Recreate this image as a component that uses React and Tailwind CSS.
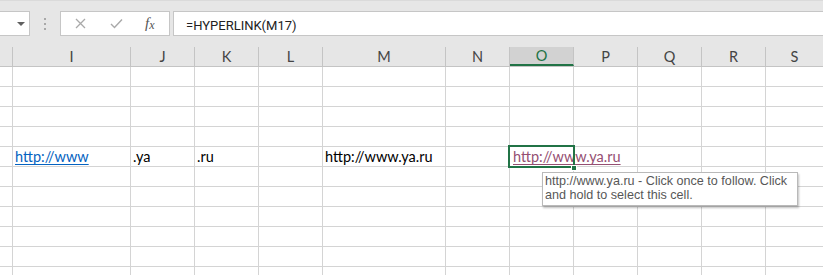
import React from "react";

const cols = [
  { key: "H", w: "w-[13px]", label: "" },
  { key: "I", w: "w-[118px]", label: "I" },
  { key: "J", w: "w-[64px]", label: "J" },
  { key: "K", w: "w-[64px]", label: "K" },
  { key: "L", w: "w-[64px]", label: "L" },
  { key: "M", w: "w-[123px]", label: "M" },
  { key: "N", w: "w-[64px]", label: "N" },
  { key: "O", w: "w-[64px]", label: "O" },
  { key: "P", w: "w-[64px]", label: "P" },
  { key: "Q", w: "w-[64px]", label: "Q" },
  { key: "R", w: "w-[64px]", label: "R" },
  { key: "S", w: "flex-1", label: "S" },
];

const rowCount = 11;
const dataRow = 4;

function CellContent({ col, row }) {
  if (row !== dataRow) return null;
  if (col === "I")
    return (
      <span className="text-[#0563c1] underline underline-offset-[2px] decoration-[1px]">
        http://www
      </span>
    );
  if (col === "J") return <span className="text-black">.ya</span>;
  if (col === "K") return <span className="text-black">.ru</span>;
  if (col === "M") return <span className="text-black">http://www.ya.ru</span>;
  if (col === "O")
    return (
      <>
        <span className="text-[#954f72] underline underline-offset-[2px] decoration-[1px] pl-[1px]">
          http://www.ya.ru
        </span>
        <div className="absolute left-[-2px] top-[-2px] w-[67px] h-[23px] border-2 border-[#217346] z-10" />
        <div className="absolute left-[61px] top-[18px] w-[6px] h-[6px] bg-[#217346] border border-white z-20" />
      </>
    );
  return null;
}

export default function App() {
  return (
    <div className="relative w-[823px] h-[275px] overflow-hidden bg-white font-['Lato',sans-serif]">
      {/* Top formula bar area */}
      <div className="h-[47px] bg-[#e6e6e6] border-t border-[#dadada] flex flex-col">
        <div className="mt-[10px] h-[25px] flex items-stretch">
          {/* Name box */}
          <div className="w-[30px] bg-white border-y border-r border-[#c6c6c6] relative">
            <div className="absolute left-[17px] top-[10px] w-0 h-0 border-l-[4px] border-r-[4px] border-t-[4px] border-l-transparent border-r-transparent border-t-[#606060]" />
          </div>
          {/* dots */}
          <div className="w-[30px] flex flex-col items-center justify-center gap-[3px]">
            <div className="w-[2px] h-[2px] bg-[#a8a8a8]" />
            <div className="w-[2px] h-[2px] bg-[#a8a8a8]" />
            <div className="w-[2px] h-[2px] bg-[#a8a8a8]" />
          </div>
          {/* buttons */}
          <div className="w-[110px] bg-white border border-[#c6c6c6] flex items-center">
            <svg className="ml-[14px]" width="11" height="11" viewBox="0 0 11 11">
              <path d="M1 1 L10 10 M10 1 L1 10" stroke="#a9a9a9" strokeWidth="1.3" fill="none" />
            </svg>
            <svg className="ml-[24px]" width="13" height="11" viewBox="0 0 13 11">
              <path d="M1 6 L4.5 9.5 L12 1.5" stroke="#a9a9a9" strokeWidth="1.4" fill="none" />
            </svg>
            <span className="ml-[22px] font-['Liberation_Serif',serif] italic text-[15px] text-[#555] leading-none">
              f<span className="text-[12px] relative top-[1px]">x</span>
            </span>
          </div>
          {/* formula input */}
          <div className="ml-[3px] flex-1 bg-white border-y border-l border-[#c6c6c6] pl-[12px] pt-[6px]">
            <div className="font-['Roboto',sans-serif] text-[13px] leading-[15px] text-[#222]">
              =HYPERLINK(M17)
            </div>
          </div>
        </div>
      </div>

      {/* Column header row */}
      <div className="flex h-[20px] bg-[#e6e6e6] border-b border-[#c4c4c4]">
        {cols.map((c) => (
          <div
            key={c.key}
            className={
              c.w +
              " shrink-0 h-full flex items-center justify-center text-[14.5px] leading-none pt-[1px] " +
              (c.key === "O"
                ? "bg-[#d2d2d2] text-[#217346] border-b-2 border-[#217346] border-r border-r-[#c4c4c4]"
                : c.key === "S"
                ? "text-[#444]"
                : "text-[#444] border-r border-[#c4c4c4]")
            }
          >
            {c.label}
          </div>
        ))}
      </div>

      {/* Grid rows */}
      {Array.from({ length: rowCount }).map((_, r) => (
        <div key={r} className="flex h-[20px]">
          {cols.map((c) => (
            <div
              key={c.key}
              className={
                c.w +
                " shrink-0 h-full relative whitespace-nowrap overflow-visible pl-[2px] text-[14.5px] leading-[19px] border-b border-[#d4d4d4] " +
                (c.key === "S" ? "" : "border-r")
              }
            >
              <CellContent col={c.key} row={r} />
            </div>
          ))}
        </div>
      ))}

      {/* Tooltip */}
      <div className="absolute left-[542px] top-[172px] w-[256px] h-[34px] bg-white border border-[#b9b9b9] shadow-[1px_2px_2px_rgba(0,0,0,0.25)] pl-[2px] pt-[1px] z-30">
        <div className="font-['Liberation_Sans',sans-serif] text-[12.6px] leading-[14px] text-[#575757]">
          <div>http://www.ya.ru - Click once to follow. Click</div>
          <div>and hold to select this cell.</div>
        </div>
      </div>
    </div>
  );
}
